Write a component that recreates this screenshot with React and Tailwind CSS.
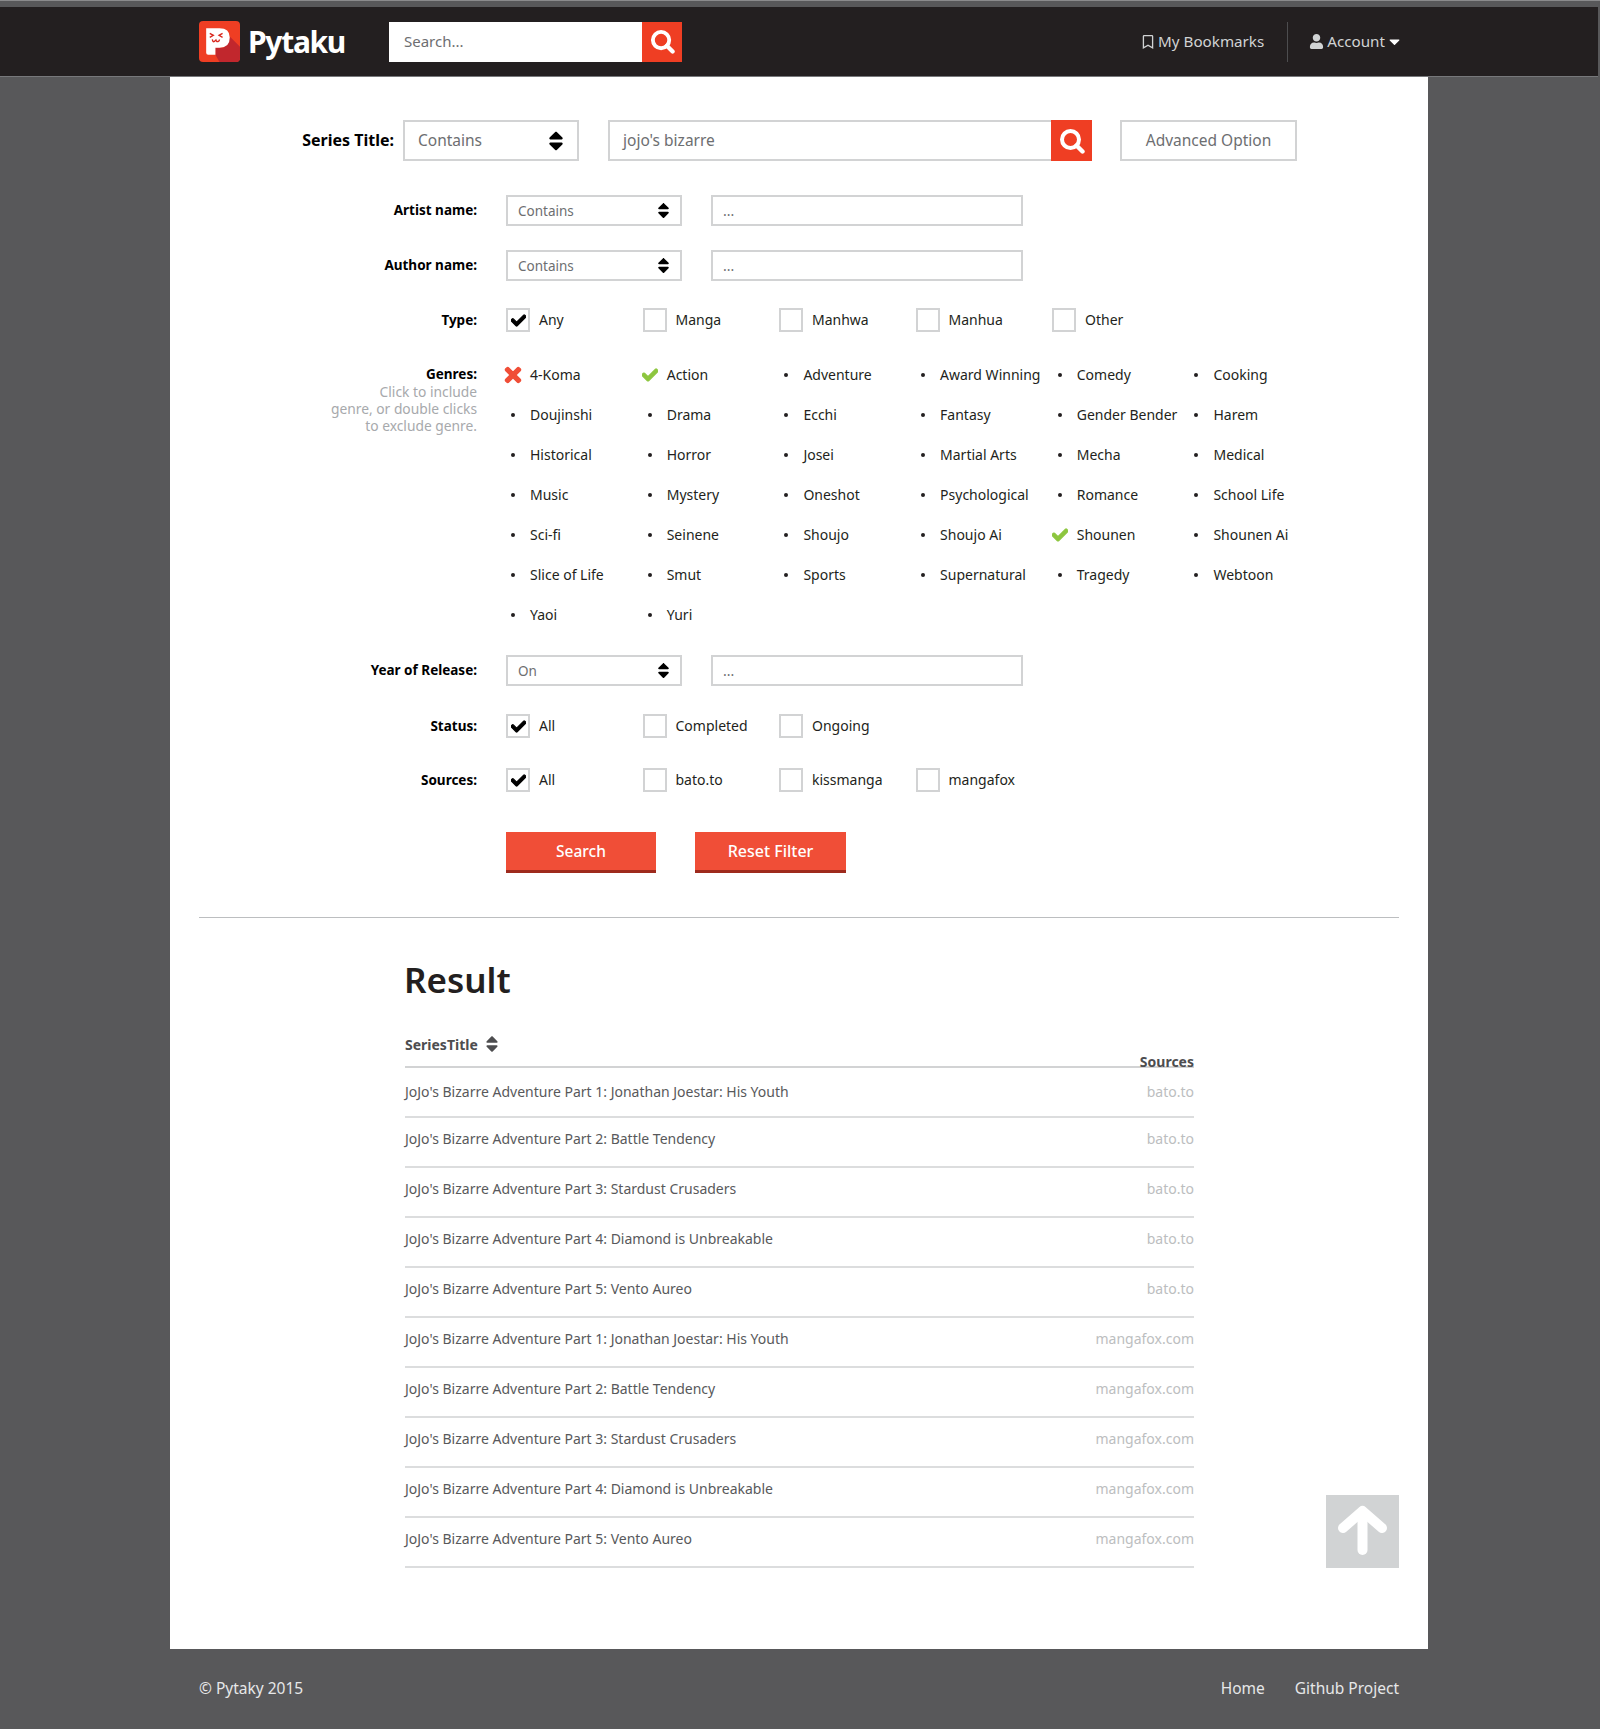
import React from "react";
import { FaCheck, FaTimes, FaSort, FaRegBookmark, FaUser, FaCaretDown } from "react-icons/fa";

const genres = [
  "4-Koma", "Action", "Adventure", "Award Winning", "Comedy", "Cooking",
  "Doujinshi", "Drama", "Ecchi", "Fantasy", "Gender Bender", "Harem",
  "Historical", "Horror", "Josei", "Martial Arts", "Mecha", "Medical",
  "Music", "Mystery", "Oneshot", "Psychological", "Romance", "School Life",
  "Sci-fi", "Seinene", "Shoujo", "Shoujo Ai", "Shounen", "Shounen Ai",
  "Slice of Life", "Smut", "Sports", "Supernatural", "Tragedy", "Webtoon",
  "Yaoi", "Yuri",
];
const included = ["Action", "Shounen"];

const parts = [
  "Part 1: Jonathan Joestar: His Youth",
  "Part 2: Battle Tendency",
  "Part 3: Stardust Crusaders",
  "Part 4: Diamond is Unbreakable",
  "Part 5: Vento Aureo",
];

const Lens = ({ size }) => (
  <svg width={size} height={size} viewBox="0 0 26 26" fill="none" stroke="#fff">
    <circle cx="11.5" cy="11.5" r="8.5" strokeWidth="4" />
    <path d="M17.5 17.5L23.5 23.5" strokeWidth="4.4" strokeLinecap="round" />
  </svg>
);

const Logo = () => (
  <svg width="41" height="41" viewBox="0 0 40 40">
    <rect width="40" height="40" rx="4" fill="#ef3e23" />
    <path d="M7 33H16L20 40H36Q40 40 40 36V25L30 15L24 26H16V33Z" fill="#c1272d" />
    <path d="M7 7H20Q30 7 30 16Q30 26 20 26H16V33H9Q7 33 7 31Z" fill="#fff" />
    <path d="M10.5 12L14 14L10.5 16M23 12L19.500 14L23 16" fill="none" stroke="#d9261c" strokeWidth="1.3" />
    <path d="M13 18Q13.500 21 15 20Q16.500 18.500 16.500 18.500Q17 20.500 18.500 20Q20 19.500 20 18" fill="none" stroke="#d9261c" strokeWidth="1.3" />
  </svg>
);

const ArrowUp = () => (
  <svg width="73" height="73" viewBox="0 0 73 73" fill="none" stroke="#fff" strokeWidth="10" strokeLinecap="round" strokeLinejoin="round">
    <path d="M17 33L36.500 16L56 33" />
    <path d="M36.500 20V55" />
  </svg>
);

const Label = ({ children }) => (
  <div className="w-[307px] text-right text-[13.5px] font-bold text-black shrink-0">{children}</div>
);

const SmallSelect = ({ value }) => (
  <div className="w-[176px] h-[31px] border-2 border-[#d2d3d4] flex items-center justify-between pl-[10px] pr-[7px] text-[13.5px] text-[#6d6e71]">
    <span className="pt-[2px]">{value}</span>
    <FaSort className="text-black text-[19px]" />
  </div>
);

const SmallInput = () => (
  <div className="ml-[29px] w-[312px] h-[31px] border-2 border-[#d2d3d4] flex items-center pl-[10px] text-[14px] text-[#6d6e71]">...</div>
);

const Check = ({ label, checked }) => (
  <div className="w-[136.5px] flex items-center text-[14px] text-[#231f20] shrink-0">
    <div className="w-[24px] h-[24px] border-2 border-[#d2d3d4] flex items-center justify-center shrink-0">
      {checked && <FaCheck className="text-black text-[15px] stroke-[40px]" />}
    </div>
    <span className="ml-[9px] pb-[2px]">{label}</span>
  </div>
);

const FilterRow = ({ label, className, children }) => (
  <div className={"flex items-center " + className}>
    <Label>{label}</Label>
    <div className="ml-[29px] flex items-center">{children}</div>
  </div>
);

function Genre({ name }) {
  let mark = <span className="w-[4px] h-[4px] rounded-full bg-[#231f20] ml-[5px]"></span>;
  if (name === "4-Koma") mark = <FaTimes className="text-[#f04e37] text-[22px] -ml-[4px] stroke-[30px]" />;
  if (included.includes(name)) mark = <FaCheck className="text-[#8dc63f] text-[16px] -ml-[1px] stroke-[40px]" />;
  return (
    <div className="h-[40px] flex items-center text-[14px] text-[#231f20] whitespace-nowrap pb-[1px]">
      <div className="w-[24px] flex items-center shrink-0">{mark}</div>
      {name}
    </div>
  );
}

const Row = ({ title, source }) => (
  <div className="h-[50px] border-b-2 border-[#dcddde] flex items-center justify-between pb-[8px] first:pb-[2px] text-[14px]">
    <span className="text-[#58595b]">JoJo's Bizarre Adventure {title}</span>
    <span className="text-[#bcbec0]">{source}</span>
  </div>
);

export default function App() {
  return (
    <div className="min-h-[1729px] bg-[#58585a] font-['Noto_Sans',sans-serif]">
      <div className="h-[7px] border-t border-[#8a8a8c]"></div>

      <nav className="w-[1598px] h-[70px] bg-[#231f20] border-b border-[#77787b] flex items-center pl-[199px] pr-[195px]">
        <Logo />
        <span className="ml-[8px] w-[132px] text-[30px] font-bold text-white tracking-[-1.3px]">Pytaku</span>
        <div className="ml-[9px] w-[293px] h-[40px] flex">
          <div className="w-[253px] bg-white flex items-center pl-[15px] text-[15px] text-[#6d6e71]">Search...</div>
          <div className="w-[40px] bg-[#ef3e23] flex items-center justify-center"><Lens size={25} /></div>
        </div>
        <div className="ml-auto flex items-center text-[15.2px] text-[#d1d3d4] h-[40px]">
          <FaRegBookmark className="text-[14px] mr-[3px]" />
          <span>My Bookmarks</span>
          <div className="w-px h-[40px] bg-[#4d4d4f] ml-[23px] mr-[21px]"></div>
          <FaUser className="text-[15px] mr-[3px]" />
          <span>Account</span>
          <FaCaretDown className="text-[17px] text-white ml-[1px]" />
        </div>
      </nav>

      <main className="relative w-[1258px] h-[1572px] ml-[170px] bg-white pt-[43px]">
        <div className="flex items-center">
          <div className="w-[224px] pb-[2px] text-right text-[16px] font-bold text-black">Series Title:</div>
          <div className="ml-[9px] w-[176px] h-[41px] border-2 border-[#d2d3d4] flex items-center justify-between pl-[13px] pr-[9px] text-[15.5px] text-[#6d6e71]">
            <span>Contains</span>
            <FaSort className="text-black text-[24px]" />
          </div>
          <div className="ml-[29px] w-[484px] h-[41px] flex">
            <div className="flex-1 border-2 border-r-0 border-[#d2d3d4] flex items-center pl-[13px] text-[15.5px] text-[#6d6e71]">jojo's bizarre</div>
            <div className="w-[41px] bg-[#ef3e23] flex items-center justify-center"><Lens size={26} /></div>
          </div>
          <div className="ml-[28px] w-[177px] h-[41px] border-2 border-[#d2d3d4] flex items-center justify-center text-[15.5px] text-[#6d6e71]">Advanced Option</div>
        </div>

        <FilterRow label="Artist name:" className="mt-[34px]">
          <SmallSelect value="Contains" />
          <SmallInput />
        </FilterRow>
        <FilterRow label="Author name:" className="mt-[24px]">
          <SmallSelect value="Contains" />
          <SmallInput />
        </FilterRow>
        <FilterRow label="Type:" className="mt-[27px]">
          <Check label="Any" checked />
          <Check label="Manga" />
          <Check label="Manhwa" />
          <Check label="Manhua" />
          <Check label="Other" />
        </FilterRow>

        <div className="flex mt-[23px]">
          <div className="w-[307px] shrink-0 text-right pt-[11px]">
            <div className="text-[13.5px] font-bold text-black leading-[17px]">Genres:</div>
            <div className="text-[13.8px] text-[#a7a9ac] leading-[17px]">Click to include<br />genre, or double clicks<br />to exclude genre.</div>
          </div>
          <div className="ml-[29px] grid grid-cols-[repeat(6,136.7px)]">
            {genres.map((g) => <Genre key={g} name={g} />)}
          </div>
        </div>

        <FilterRow label="Year of Release:" className="mt-[20px]">
          <SmallSelect value="On" />
          <SmallInput />
        </FilterRow>
        <FilterRow label="Status:" className="mt-[28px]">
          <Check label="All" checked />
          <Check label="Completed" />
          <Check label="Ongoing" />
        </FilterRow>
        <FilterRow label="Sources:" className="mt-[30px]">
          <Check label="All" checked />
          <Check label="bato.to" />
          <Check label="kissmanga" />
          <Check label="mangafox" />
        </FilterRow>

        <div className="flex mt-[40px] ml-[336px] gap-[39px]">
          <button className="w-[150px] h-[41px] pt-[2px] bg-[#f04e37] border-b-[3px] border-[#9e2a1d] text-white text-[15.5px] font-medium">Search</button>
          <button className="w-[151px] h-[41px] bg-[#f04e37] border-b-[3px] border-[#9e2a1d] text-white text-[16px] font-medium">Reset Filter</button>
        </div>

        <div className="mt-[44px] mx-[29px] h-px bg-[#bcbec0]"></div>

        <div className="ml-[235px] w-[789px]">
          <h1 className="mt-[37px] -ml-[1px] h-[50px] flex items-center text-[35px] font-semibold text-[#231f20]">Result</h1>
          <div className="h-[63px] border-b-2 border-[#d2d3d4] flex items-start justify-between text-[14px] font-bold text-[#4d4d4f]">
            <div className="mt-[29px] h-[20px] flex items-center">SeriesTitle <FaSort className="ml-[4px] text-[20px]" /></div>
            <div className="mt-[47px] h-[20px] leading-[20px]">Sources</div>
          </div>
          <div>
            {parts.map((p) => <Row key={p} title={p} source="bato.to" />)}
            {parts.map((p) => <Row key={p + "-fox"} title={p} source="mangafox.com" />)}
          </div>
        </div>

        <div className="absolute left-[1156px] top-[1418px] w-[73px] h-[73px] bg-[#d1d3d4]">
          <ArrowUp />
        </div>
      </main>

      <footer className="h-[80px] pl-[199px] pr-[201px] pb-[1px] flex items-center justify-between text-[15.5px] text-[#e6e7e8]">
        <span>© Pytaky 2015</span>
        <div className="flex gap-[30px]">
          <span>Home</span>
          <span>Github Project</span>
        </div>
      </footer>
    </div>
  );
}
